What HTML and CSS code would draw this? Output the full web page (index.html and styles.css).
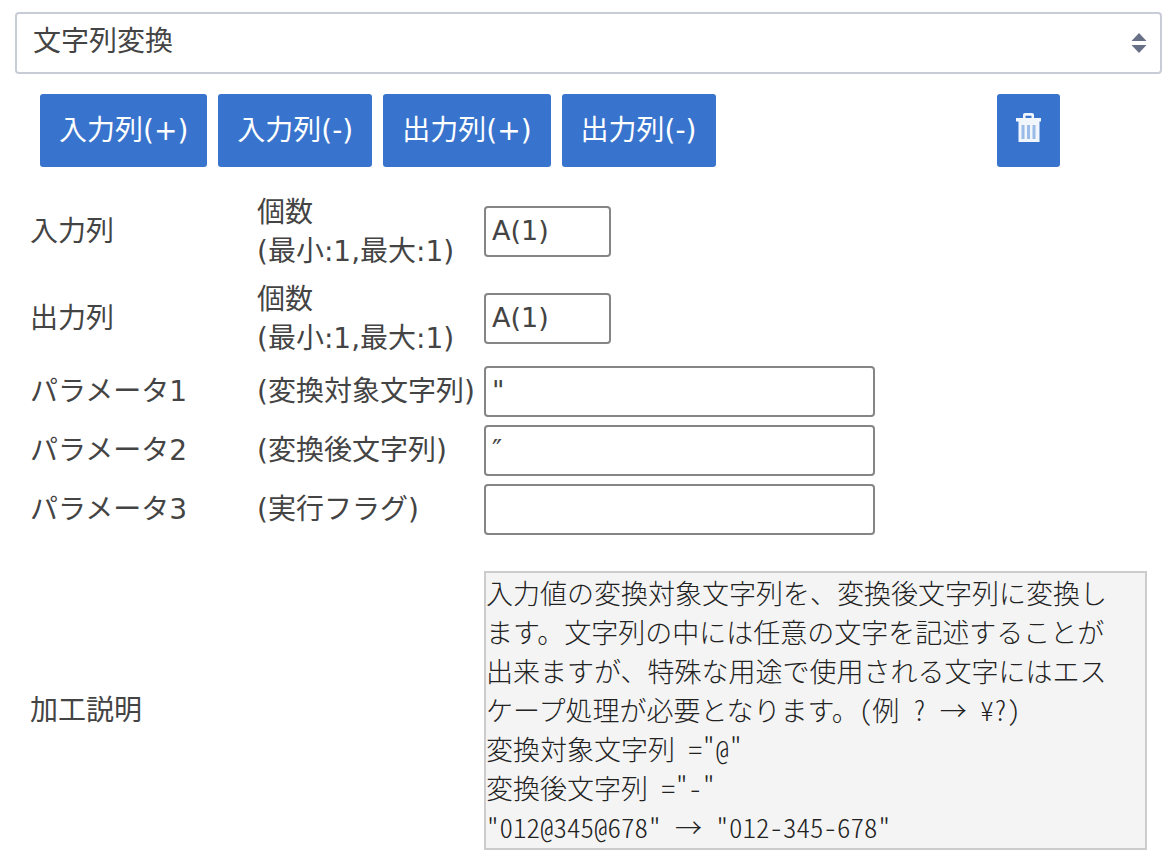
FILE: index.html
```html
<!DOCTYPE html>
<html lang="ja">
<head>
    <meta charset="UTF-8">
    <meta name="viewport" content="width=device-width, initial-scale=1.0">
    <title>文字列変換</title>
    <link rel="stylesheet" href="styles.css">
</head>
<body>
    <form class="converter">
        <div class="select-wrap">
            <select class="select" aria-label="加工">
                <option selected>文字列変換</option>
            </select>
            <svg class="select-arrows" width="16" height="20" viewBox="0 0 16 20" aria-hidden="true">
                <path d="M8 0l7.5 8H.5zM8 20l7.5-8H.5z" fill="#687087"/>
            </svg>
        </div>

        <div class="toolbar">
            <button type="button" class="button">入力列(+)</button>
            <button type="button" class="button">入力列(-)</button>
            <button type="button" class="button">出力列(+)</button>
            <button type="button" class="button">出力列(-)</button>
            <button type="button" class="button button-delete" aria-label="削除">
                <svg width="25" height="30" viewBox="0 0 25 30" aria-hidden="true">
                    <path d="M7 5V2q0-2 2-2h7q2 0 2 2v3h7v3.500h-1.500V29h-21V8.500H0V5zM9.500 5h6V2.800h-6z" fill="#f1f6fd" fill-rule="evenodd"/>
                    <path d="M5.500 12h3v14h-3zM11 12h3v14h-3zM16.500 12h3v14h-3z" fill="#9bbce8"/>
                </svg>
            </button>
        </div>

        <div class="fields">
            <div class="row row-column">
                <label for="inputColumn">入力列</label>
                <span>個数<br>(最小:1,最大:1)</span>
                <input id="inputColumn" class="input input-short" type="text" value="A(1)">
            </div>
            <div class="row row-column">
                <label for="outputColumn">出力列</label>
                <span>個数<br>(最小:1,最大:1)</span>
                <input id="outputColumn" class="input input-short" type="text" value="A(1)">
            </div>
            <div class="row row-param">
                <label for="param1">パラメータ1</label>
                <span>(変換対象文字列)</span>
                <input id="param1" class="input" type="text" value="&quot;">
            </div>
            <div class="row row-param">
                <label for="param2">パラメータ2</label>
                <span>(変換後文字列)</span>
                <input id="param2" class="input" type="text" value="″">
            </div>
            <div class="row row-param">
                <label for="param3">パラメータ3</label>
                <span>(実行フラグ)</span>
                <input id="param3" class="input" type="text" value="">
            </div>
            <div class="row row-description">
                <label for="description">加工説明</label>
                <textarea id="description" class="description" rows="7" readonly>入力値の変換対象文字列を、変換後文字列に変換します。文字列の中には任意の文字を記述することが出来ますが、特殊な用途で使用される文字にはエスケープ処理が必要となります。(例 ? → ¥?)
変換対象文字列 ="@"
変換後文字列 ="-"
"012@345@678" → "012-345-678"</textarea>
            </div>
        </div>
    </form>
</body>
</html>
```

FILE: styles.css
```css
:root {
    --primary-color: #3874cd;
    --text-color: #444;
    --border-color: #c8ccd6;
}

* {
    box-sizing: border-box;
}

body {
    margin: 0;
    background: white;
    color: var(--text-color);
    font-family: "DejaVu Sans", "Noto Sans CJK JP", sans-serif;
    font-size: 28px;
    line-height: 39px;
}

.converter {
    padding: 12px 8px 12px 15px;
}

.select-wrap {
    position: relative;
}

.select {
    display: block;
    width: 100%;
    height: 62px;
    padding: 0 48px 4px 16px;
    border: 2px solid var(--border-color);
    border-radius: 4px;
    appearance: none;
    background: white;
    color: var(--text-color);
    font: inherit;
}

.select-arrows {
    position: absolute;
    top: 21px;
    right: 15px;
    pointer-events: none;
}

.toolbar {
    display: flex;
    gap: 11px;
    margin: 20px 102px 0 25px;
}

.button {
    height: 73px;
    padding: 0 19px;
    border: none;
    border-radius: 3px;
    background: var(--primary-color);
    color: white;
    font: inherit;
    white-space: nowrap;
    cursor: pointer;
}

.button-delete {
    margin-left: auto;
    padding-bottom: 6px;
}

.button-delete svg {
    display: block;
}

.fields {
    margin: 21px 15px 0;
}

.row {
    display: grid;
    grid-template-columns: 227px 227px 1fr;
    align-items: center;
    white-space: nowrap;
}

.row-column {
    height: 87px;
}

.row-param {
    height: 59px;
}

.input {
    width: 391px;
    height: 51px;
    padding: 0 6px 3px;
    border: 2px solid #858585;
    border-radius: 4px;
    background: white;
    color: var(--text-color);
    font: inherit;
    font-size: 27px;
}

.input-short {
    width: 127px;
}

.row-description {
    grid-template-columns: 454px 1fr;
    margin-top: 32px;
}

.description {
    display: block;
    width: 100%;
    height: 279px;
    padding: 0 20px 0 0;
    border: 2px solid #ccc;
    background: #f4f4f4;
    color: #222;
    font-family: "Noto Sans CJK JP", sans-serif;
    font-feature-settings: "hwid";
    font-size: 27px;
    font-weight: 300;
    line-height: 39px;
    resize: none;
    overflow: hidden;
}
```
